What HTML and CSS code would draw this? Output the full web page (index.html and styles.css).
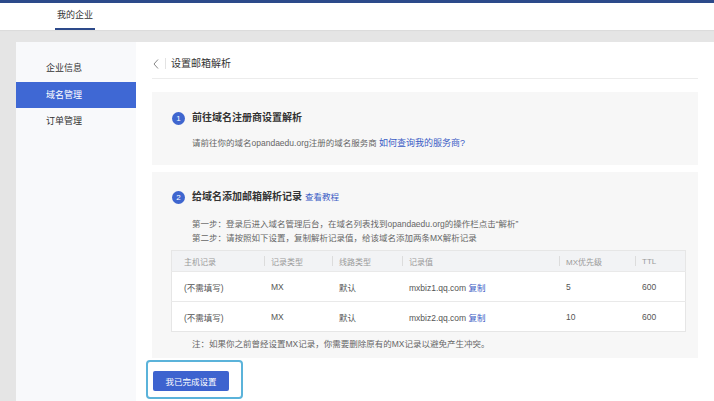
FILE: index.html
```html
<!DOCTYPE html>
<html lang="zh-CN">
<head>
  <meta charset="UTF-8">
  <title>设置邮箱解析</title>
  <link rel="stylesheet" href="styles.css">
</head>
<body>

  <div class="topbar"></div>
  <div class="header">
    <div class="nav-item active">我的企业</div>
  </div>

  <div class="layout">
    <div class="sidebar">
      <div class="side-item">企业信息</div>
      <div class="side-item active">域名管理</div>
      <div class="side-item">订单管理</div>
    </div>

    <div class="main">
      <div class="page-title">
        <svg class="back" width="6" height="10" viewBox="0 0 6 10"><path d="M5 0.5 L1 5 L5 9.5" fill="none" stroke="#888" stroke-width="1"/></svg>
        <span class="title-sep"></span>
        <span>设置邮箱解析</span>
      </div>

      <div class="panel step1">
        <div class="step-title"><span class="num">1</span>前往域名注册商设置解析</div>
        <div class="step-text">请前往你的域名opandaedu.org注册的域名服务商 <a class="link big">如何查询我的服务商?</a></div>
      </div>

      <div class="panel step2">
        <div class="step-title"><span class="num">2</span>给域名添加邮箱解析记录 <a class="link small">查看教程</a></div>
        <div class="step-lines">
          <div>第一步：登录后进入域名管理后台，在域名列表找到opandaedu.org的操作栏点击“解析”</div>
          <div>第二步：请按照如下设置，复制解析记录值，给该域名添加两条MX解析记录</div>
        </div>
        <table class="records">
          <thead>
            <tr>
              <th class="c1">主机记录</th>
              <th class="c2">记录类型</th>
              <th class="c3">线路类型</th>
              <th class="c4">记录值</th>
              <th class="c5">MX优先级</th>
              <th class="c6">TTL</th>
            </tr>
          </thead>
          <tbody>
            <tr>
              <td>(不需填写)</td>
              <td>MX</td>
              <td>默认</td>
              <td>mxbiz1.qq.com <a class="link">复制</a></td>
              <td>5</td>
              <td>600</td>
            </tr>
            <tr>
              <td>(不需填写)</td>
              <td>MX</td>
              <td>默认</td>
              <td>mxbiz2.qq.com <a class="link">复制</a></td>
              <td>10</td>
              <td>600</td>
            </tr>
          </tbody>
        </table>
        <div class="note">注：如果你之前曾经设置MX记录，你需要删除原有的MX记录以避免产生冲突。</div>
      </div>

      <div class="focus-ring">
        <button class="done">我已完成设置</button>
      </div>
    </div>
  </div>

</body>
</html>
```

FILE: styles.css
```css
body {
  margin: 0;
  background: #e5e5e5;
  font-family: "Liberation Sans", "Noto Sans CJK SC", sans-serif;
  color: #333;
}
.topbar {
  height: 3px;
  background: #2c4a8a;
}
.header {
  height: 27px;
  background: #fff;
  display: flex;
  box-shadow: 0 1px 1px rgba(0,0,0,0.04);
}
.nav-item {
  margin-left: 55px;
  padding: 0 2px;
  font-size: 9px;
  line-height: 25px;
  color: #333;
  border-bottom: 2px solid transparent;
}
.nav-item.active {
  border-bottom-color: #2d4a8a;
}
.layout {
  display: flex;
  margin: 12px 0 0 16px;
  background: #fff;
  min-height: 359px;
}
.sidebar {
  flex-shrink: 0;
  width: 120px;
  background: #f8f9fb;
  padding-top: 13px;
}
.side-item {
  height: 27px;
  line-height: 27px;
  padding-left: 30px;
  font-size: 9px;
  color: #333;
}
.side-item.active {
  height: 26px;
  line-height: 26px;
  background: #3f68d4;
  color: #fff;
}
.main {
  flex: 1;
  min-width: 0;
  padding: 0 16px;
}
.page-title {
  display: flex;
  align-items: center;
  padding: 15px 0 8px 1px;
  border-bottom: 1px solid #ececec;
  font-size: 10px;
  line-height: 13px;
  color: #333;
}
.back {
  display: block;
}
.title-sep {
  width: 1px;
  height: 11px;
  background: #e3e3e3;
  margin: 0 5px 0 6px;
}
.panel {
  background: #f7f7f7;
  padding-left: 20px;
}
.step1 {
  margin-top: 13px;
  padding-top: 19px;
  padding-bottom: 15px;
}
.step2 {
  margin-top: 7px;
  padding-top: 18px;
  padding-right: 13px;
  padding-bottom: 7px;
}
.step-title {
  display: flex;
  align-items: center;
  font-size: 10px;
  line-height: 14px;
  font-weight: bold;
  color: #333;
}
.num {
  width: 13px;
  height: 13px;
  border-radius: 50%;
  background: #3f66cf;
  color: #fff;
  font-size: 8px;
  line-height: 13px;
  text-align: center;
  font-weight: normal;
  margin-right: 7px;
}
.link {
  color: #3a5cc5;
  text-decoration: none;
  font-weight: normal;
}
.link.big {
  font-size: 9px;
}
.link.small {
  font-size: 8.5px;
  margin-left: 3px;
}
.step-text {
  margin: 12px 0 0 20px;
  font-size: 8.5px;
  line-height: 13px;
  color: #666;
}
.step-lines {
  margin: 13px 0 0 20px;
  font-size: 8.5px;
  line-height: 14px;
  color: #666;
}
.records {
  margin: 5px 0 0 -1px;
  width: 514px;
  border-collapse: collapse;
  border: 1px solid #e6e6e6;
  background: #fff;
  font-size: 8.5px;
  color: #555;
  table-layout: fixed;
}
.records th {
  position: relative;
  height: 20px;
  padding: 0 0 0 11px;
  background: #f2f3f5;
  color: #9a9a9a;
  font-weight: normal;
  text-align: left;
  font-size: 8px;
}
.records th + th::before {
  content: "";
  position: absolute;
  left: 4px;
  top: 5px;
  width: 1px;
  height: 10px;
  background: #dcdcdc;
}
.records td {
  height: 29px;
  padding: 0 0 0 11px;
  border-top: 1px solid #e9e9e9;
}
.records .c1 { width: 76px; padding-left: 12px; }
.records .c2 { width: 57px; }
.records .c3 { width: 59px; }
.records .c4 { width: 146px; }
.records .c5 { width: 65px; }
.records .c6 { width: 43px; }
.records td:first-child {
  padding-left: 12px;
}
.note {
  margin: 6px 0 0 20px;
  font-size: 8.5px;
  line-height: 13px;
  color: #666;
}
.focus-ring {
  display: inline-block;
  margin: 2px 0 0 -6px;
  padding: 9px 12px 6px 5px;
  border: 2px solid #5bb3da;
  border-radius: 4px;
}
.done {
  display: block;
  width: 76px;
  height: 20px;
  padding: 0;
  border: none;
  border-radius: 2px;
  background: #3d63cf;
  color: #fff;
  font-family: "Liberation Sans", "Noto Sans CJK SC", sans-serif;
  font-size: 8.5px;
}
```
